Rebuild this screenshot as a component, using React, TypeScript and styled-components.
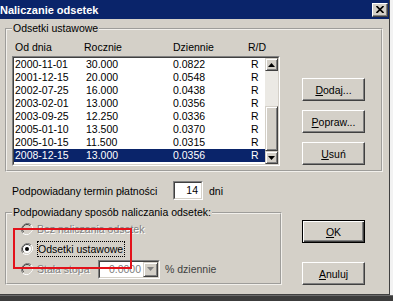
import React from "react";
import styled, { createGlobalStyle, css } from "styled-components";

const GlobalStyle = createGlobalStyle`
  html, body {
    margin: 0;
    padding: 0;
    overflow: hidden;
  }
  body {
    font-family: "Liberation Sans", Arial, sans-serif;
    font-size: 10.5px;
    color: #000;
  }
`;

const FACE = "#d4d0c8";
const NAVY = "#0a246a";

const Screen = styled.div`
  width: 393px;
  height: 301px;
  display: flex;
  flex-direction: column;
  background: #f2f2f2;
`;

const Window = styled.div`
  position: relative;
  width: 390px;
  height: 295px;
  box-sizing: border-box;
  display: flex;
  flex-direction: column;
  background: ${FACE};
  border-right: 1px solid #404040;
  border-bottom: 1px solid #404040;
`;

const Taskbar = styled.div`
  flex: 1;
  background: #3c3c3c;
  border-top: 1px solid #6a6a6a;
`;

const TitleBar = styled.div`
  height: 19px;
  flex: none;
  display: flex;
  align-items: center;
  justify-content: space-between;
  background: ${NAVY};
  padding-right: 1px;
`;

const Title = styled.span`
  color: #fff;
  font-weight: bold;
  font-size: 11px;
  margin-left: 0;
  white-space: nowrap;
`;

const CloseButton = styled.div`
  width: 16px;
  height: 14px;
  box-sizing: border-box;
  display: flex;
  align-items: center;
  justify-content: center;
  background: ${FACE};
  border: 1px solid;
  border-color: #fff #404040 #404040 #fff;
  box-shadow: inset -1px -1px #808080;
`;

const Body = styled.div`
  flex: 1;
  display: flex;
  flex-direction: column;
  padding: 3px 6px 0 5px;
`;

const Group = styled.fieldset<{ $width?: number }>`
  margin: 0;
  padding: 0 6px 4px 5px;
  min-width: 0;
  border: 2px groove #f2f0ec;
  ${(p) =>
    p.$width &&
    css`
      width: ${p.$width}px;
      box-sizing: border-box;
    `}
`;

const Legend = styled.legend`
  padding: 0 1px;
  line-height: 13px;
`;

const TopRow = styled.div`
  display: flex;
`;

const ListColumn = styled.div`
  display: flex;
  flex-direction: column;
`;

const HeaderRow = styled.div`
  display: grid;
  grid-template-columns: 69px 89px 75px 1fr;
  padding-left: 3px;
  margin-top: 6px;
  height: 13px;
  line-height: 13px;
  margin-bottom: 2px;
`;

const Sunken = styled.div<{ $w: number; $h: number }>`
  width: ${(p) => p.$w}px;
  height: ${(p) => p.$h}px;
  box-sizing: border-box;
  border: 1px solid;
  border-color: #808080 #fff #fff #808080;
`;

const SunkenInner = styled.div<{ $bg?: string }>`
  height: 100%;
  box-sizing: border-box;
  border: 1px solid;
  border-color: #404040 ${FACE} ${FACE} #404040;
  background: ${(p) => p.$bg ?? "#fff"};
  display: flex;
`;

const Rows = styled.div`
  flex: 1;
  display: flex;
  flex-direction: column;
`;

const Row = styled.div<{ $selected?: boolean }>`
  display: grid;
  grid-template-columns: 71px 87px 78px 1fr;
  padding-left: 1px;
  height: 13px;
  line-height: 13px;
  ${(p) =>
    p.$selected &&
    css`
      background: ${NAVY};
      color: #fff;
    `}
`;

const ScrollBar = styled.div`
  width: 13px;
  display: flex;
  flex-direction: column;
  background: #ebe9e4;
`;

const ScrollButton = styled.div`
  height: 13px;
  box-sizing: border-box;
  display: flex;
  align-items: center;
  justify-content: center;
  background: ${FACE};
  border: 1px solid;
  border-color: ${FACE} #404040 #404040 ${FACE};
  box-shadow: inset 1px 1px #fff, inset -1px -1px #808080;
`;

const ScrollTrack = styled.div`
  flex: 1;
  display: flex;
  flex-direction: column;
  justify-content: flex-end;
`;

const ScrollThumb = styled(ScrollButton)`
  height: 45px;
`;

const ButtonColumn = styled.div<{ $top: number; $gap: number; $left: number }>`
  display: flex;
  flex-direction: column;
  margin-top: ${(p) => p.$top}px;
  margin-left: ${(p) => p.$left}px;
  gap: ${(p) => p.$gap}px;
`;

const Button = styled.button<{ $default?: boolean }>`
  width: 63px;
  height: 23px;
  box-sizing: border-box;
  padding: 0;
  font-family: "Liberation Sans", Arial, sans-serif;
  font-size: 10.5px;
  color: #000;
  background: ${FACE};
  border: 1px solid;
  border-color: #fff #404040 #404040 #fff;
  box-shadow: inset -1px -1px #808080;
  ${(p) =>
    p.$default &&
    css`
      border-color: #000;
      box-shadow: inset 1px 1px #fff, inset -1px -1px #404040,
        inset -2px -2px #808080;
    `}
`;

const TermRow = styled.div`
  display: flex;
  align-items: center;
  margin-top: 9px;
  padding-left: 7px;
  height: 19px;
`;

const TermLabel = styled.span`
  width: 161px;
`;

const NumberText = styled.div`
  flex: 1;
  text-align: right;
  padding-right: 3px;
  line-height: 15px;
`;

const Unit = styled.span`
  margin-left: 6px;
`;

const BottomRow = styled.div`
  display: flex;
  margin-top: 6px;
`;

const RadioRow = styled.div`
  display: flex;
  align-items: center;
  height: 20px;
  padding-left: 9px;
`;

const RadioLabel = styled.span<{ $disabled?: boolean; $focus?: boolean; $w?: number }>`
  margin-left: 4px;
  white-space: nowrap;
  ${(p) => p.$w && css`width: ${p.$w}px;`}
  ${(p) =>
    p.$disabled &&
    css`
      color: #808080;
      text-shadow: 1px 1px #fff;
    `}
  ${(p) =>
    p.$focus &&
    css`
      border: 1px dotted #000;
      padding: 1px 1px 1px 0;
    `}
`;

const ComboText = styled.div`
  flex: 1;
  text-align: right;
  padding-right: 2px;
  line-height: 15px;
  color: #808080;
`;

const ComboButton = styled(ScrollButton)`
  width: 15px;
  height: 15px;
`;

const Suffix = styled.span`
  margin-left: 5px;
  color: #404040;
`;

const Highlight = styled.div`
  position: absolute;
  left: 13px;
  top: 228px;
  width: 119px;
  height: 41px;
  box-sizing: border-box;
  border: 2px solid #e3121b;
  pointer-events: none;
`;

const Arrow = ({ up, color = "#000" }: { up?: boolean; color?: string }) => (
  <svg width="7" height="4" viewBox="0 0 7 4">
    <path d={up ? "M3.5 0 L7 4 L0 4 Z" : "M0 0 L7 0 L3.5 4 Z"} fill={color} />
  </svg>
);

const Radio = ({ checked, disabled }: { checked?: boolean; disabled?: boolean }) => (
  <svg width="12" height="12" viewBox="0 0 12 12">
    <path d="M10.2 1.8 A6 6 0 0 0 1.8 10.2" fill="none" stroke="#808080" />
    <path d="M1.8 10.2 A6 6 0 0 0 10.2 1.8" fill="none" stroke="#fff" />
    <circle cx="6" cy="6" r="4.5" fill={disabled ? FACE : "#fff"} />
    <path d="M9.2 2.8 A4.5 4.5 0 0 0 2.8 9.2" fill="none" stroke="#404040" />
    <path d="M2.8 9.2 A4.5 4.5 0 0 0 9.2 2.8" fill="none" stroke={FACE} />
    {checked && <circle cx="6" cy="6" r="2" fill="#000" />}
  </svg>
);

const rates = [
  ["2000-11-01", "30.000", "0.0822", "R"],
  ["2001-12-15", "20.000", "0.0548", "R"],
  ["2002-07-25", "16.000", "0.0438", "R"],
  ["2003-02-01", "13.000", "0.0356", "R"],
  ["2003-09-25", "12.250", "0.0336", "R"],
  ["2005-01-10", "13.500", "0.0370", "R"],
  ["2005-10-15", "11.500", "0.0315", "R"],
  ["2008-12-15", "13.000", "0.0356", "R"],
];

const App: React.FC = () => {
  return (
    <Screen>
      <GlobalStyle />
      <Window>
        <TitleBar>
          <Title>Naliczanie odsetek</Title>
          <CloseButton>
            <svg width="8" height="7" viewBox="0 0 8 7">
              <path d="M0.5 0 L7.5 7 M7.5 0 L0.5 7" stroke="#000" strokeWidth="1.6" />
            </svg>
          </CloseButton>
        </TitleBar>
        <Body>
          <Group>
            <Legend>Odsetki ustawowe</Legend>
            <TopRow>
              <ListColumn>
                <HeaderRow>
                  <span>Od dnia</span>
                  <span>Rocznie</span>
                  <span>Dziennie</span>
                  <span>R/D</span>
                </HeaderRow>
                <Sunken $w={268} $h={110}>
                  <SunkenInner>
                    <Rows>
                      {rates.map((r, i) => (
                        <Row key={r[0]} $selected={i === rates.length - 1}>
                          {r.map((c, j) => (
                            <span key={j}>{c}</span>
                          ))}
                        </Row>
                      ))}
                    </Rows>
                    <ScrollBar>
                      <ScrollButton>
                        <Arrow up />
                      </ScrollButton>
                      <ScrollTrack>
                        <ScrollThumb />
                      </ScrollTrack>
                      <ScrollButton>
                        <Arrow />
                      </ScrollButton>
                    </ScrollBar>
                  </SunkenInner>
                </Sunken>
              </ListColumn>
              <ButtonColumn $top={43} $gap={9} $left={22}>
                <Button>
                  <u>D</u>odaj...
                </Button>
                <Button>
                  <u>P</u>opraw...
                </Button>
                <Button>
                  <u>U</u>suń
                </Button>
              </ButtonColumn>
            </TopRow>
          </Group>

          <TermRow>
            <TermLabel>Podpowiadany termin płatności</TermLabel>
            <Sunken $w={30} $h={19}>
              <SunkenInner>
                <NumberText>14</NumberText>
              </SunkenInner>
            </Sunken>
            <Unit>dni</Unit>
          </TermRow>

          <BottomRow>
            <Group $width={277}>
              <Legend>Podpowiadany sposób naliczania odsetek:</Legend>
              <RadioRow>
                <Radio disabled />
                <RadioLabel $disabled>Bez naliczania odsetek</RadioLabel>
              </RadioRow>
              <RadioRow>
                <Radio checked />
                <RadioLabel $focus>Odsetki ustawowe</RadioLabel>
              </RadioRow>
              <RadioRow>
                <Radio disabled />
                <RadioLabel $disabled $w={61}>
                  Stała stopa
                </RadioLabel>
                <Sunken $w={62} $h={19}>
                  <SunkenInner>
                    <ComboText>0.0000</ComboText>
                    <ComboButton>
                      <Arrow color="#808080" />
                    </ComboButton>
                  </SunkenInner>
                </Sunken>
                <Suffix>% dziennie</Suffix>
              </RadioRow>
            </Group>
            <ButtonColumn $top={14} $gap={19} $left={20}>
              <Button $default>
                <u>O</u>K
              </Button>
              <Button>
                <u>A</u>nuluj
              </Button>
            </ButtonColumn>
          </BottomRow>
        </Body>
        <Highlight />
      </Window>
      <Taskbar />
    </Screen>
  );
};

export default App;
